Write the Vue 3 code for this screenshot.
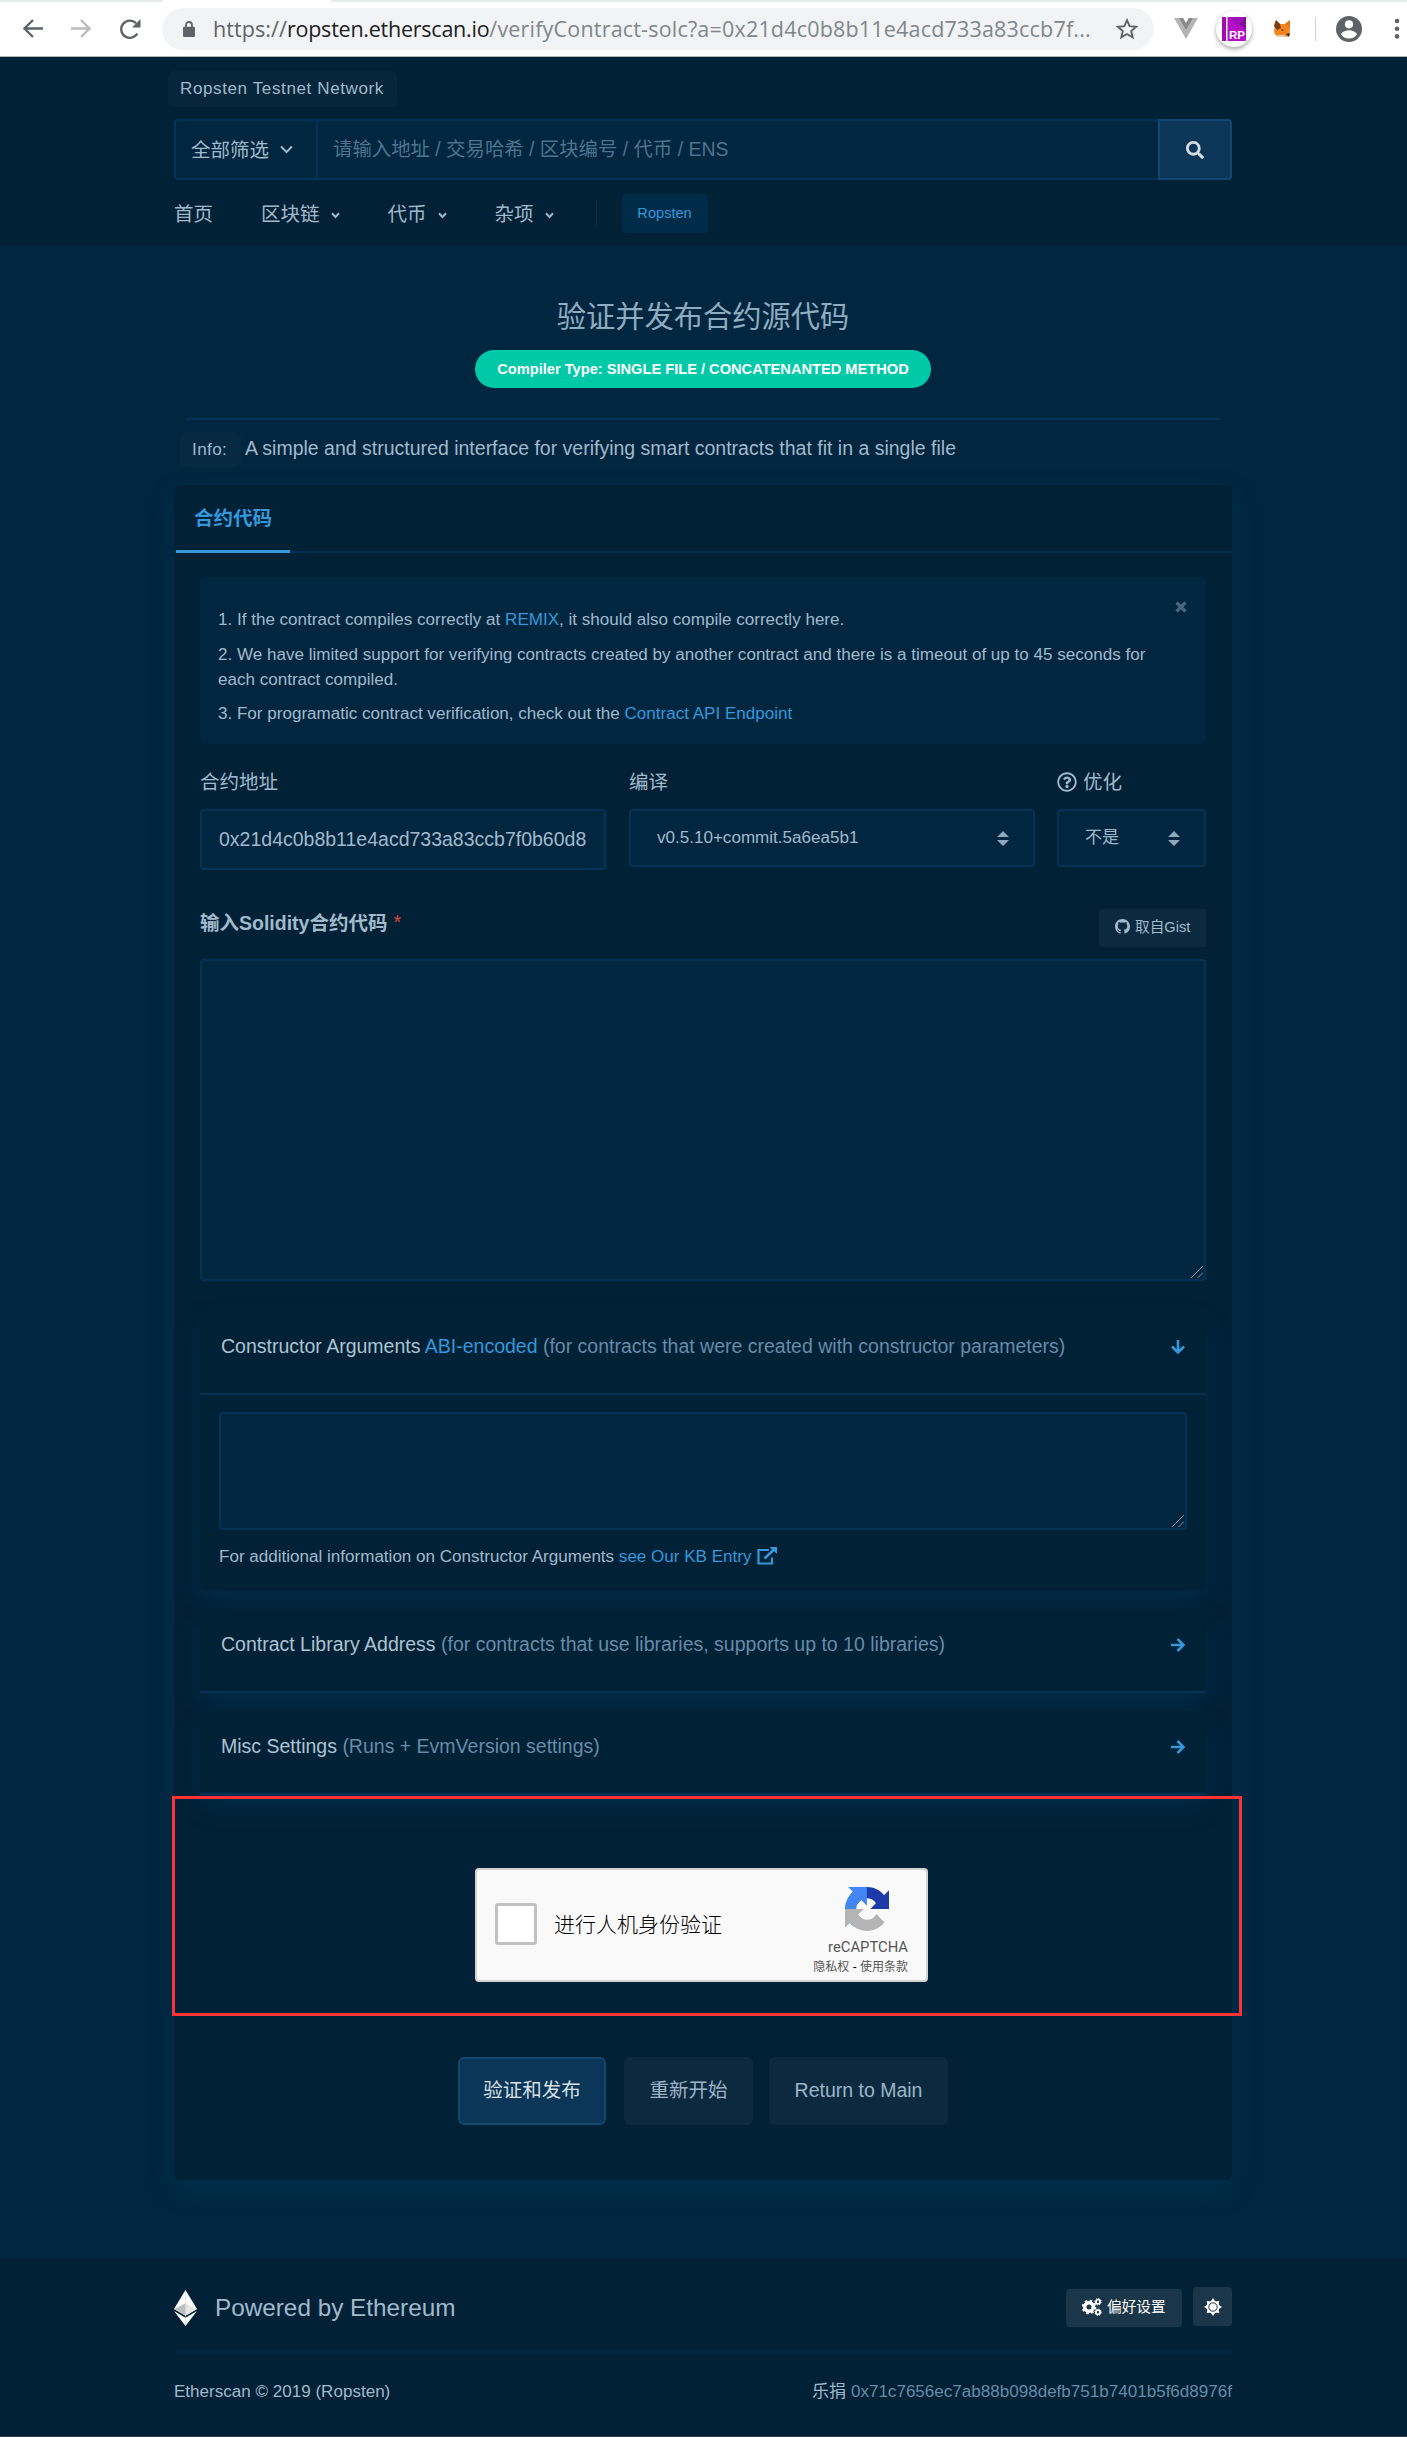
<script setup>
const nav = ['区块链', '代币', '杂项']
const gearTeeth = [0, 45, 90, 135, 180, 225, 270, 315]
</script>

<template>
  <div class="page">
    <div class="chrome">
      <div class="strip"><span class="strip-tab"></span></div>
      <svg class="c-back" viewBox="0 0 20 19"><path d="M20 9.5H2M10 1L1.5 9.500l8.500 8.500" /></svg>
      <svg class="c-fwd" viewBox="0 0 20 19"><path d="M0 9.500h18M10 1l8.500 8.500L10 18" /></svg>
      <svg class="c-reload" viewBox="0 0 22 20"><path d="M18.300 14.500A8.600 8.600 0 1 1 17 4.200" fill="none" stroke="#5f6368" stroke-width="2.400" /><path d="M21.500 0v8.500H13z" fill="#5f6368" /></svg>
      <div class="pill">
        <svg class="c-lock" viewBox="0 0 12 16"><path d="M3 7V4a3 3 0 0 1 6 0v3" fill="none" stroke="#5f6368" stroke-width="1.800" /><rect y="5.800" width="12" height="10.200" rx="1.300" fill="#5f6368" /></svg>
        <div class="url"><span class="u1">https://</span><span class="u2">ropsten.etherscan.io</span><span class="u3">/verifyContract-solc?a=0x21d4c0b8b11e4acd733a83ccb7f...</span></div>
        <svg class="c-star" viewBox="0 0 22 21"><path d="M11 2.200l2.600 6 6.500.600-4.900 4.300 1.500 6.300-5.700-3.400-5.700 3.400 1.500-6.300-4.900-4.300 6.500-.600z" /></svg>
      </div>
      <svg class="c-vue" viewBox="0 0 24 21"><path d="M0 0h4.800L12 12.500 19.200 0H24L12 21z" fill="#b4b4b4" /><path d="M4.800 0h4.400L12 4.900 14.800 0h4.400L12 12.500z" fill="#8a8a8a" /></svg>
      <div class="c-rp">
        <svg viewBox="0 0 24 24"><rect width="24" height="24" rx="1" fill="#b510c8" /><path d="M9 0h15v13z" fill="#7f0f9c" /><path d="M9 0l6 9 9-9z" fill="#9c12b4" /><rect width="4" height="24" fill="#a30cae" /><rect x="4" width="1.500" height="24" fill="#fff" /><text x="7" y="21.500" font-size="11.500">RP</text></svg>
      </div>
      <svg class="c-fox" viewBox="0 0 18 18"><path d="M2 1l5 3h5l5-4v9l-1 7-3 1-3-1H3L1 12z" fill="#f6851b" /><path d="M3 0l4 4 1 4-4 2-3-4z" fill="#763d16" /><path d="M12 4l5-4v7z" fill="#e2761b" /><path d="M3 15h8l3 2H4z" fill="#e8cdb5" /><path d="M8 9l3 1-2 1zM13 14l4-1-1 4z" fill="#3b2a20" /></svg>
      <span class="c-sep"></span>
      <svg class="c-user" viewBox="0 0 26 26"><circle cx="13" cy="13" r="13" fill="#5f6368" /><circle cx="13" cy="8.300" r="4.100" fill="#fff" /><path d="M4.800 18.200c1.500-2.700 5.200-4 8.200-4s6.700 1.300 8.200 4A9.800 9.800 0 0 1 13 22.400a9.800 9.800 0 0 1-8.200-4.200z" fill="#fff" /></svg>
      <svg class="c-dots" viewBox="0 0 6 22"><circle cx="3" cy="3" r="2.300" /><circle cx="3" cy="10.700" r="2.300" /><circle cx="3" cy="18.400" r="2.300" /></svg>
    </div>

    <header class="header">
      <div class="wrap">
        <span class="net">Ropsten Testnet Network</span>
        <div class="search">
          <div class="filter"><span>全部筛选</span><svg viewBox="0 0 12 8"><path d="M1 1.200l5 5.200 5-5.200" /></svg></div>
          <div class="query">请输入地址 / 交易哈希 / 区块编号 / 代币 / ENS</div>
          <div class="go"><svg viewBox="0 0 512 512"><path d="M505 442.700L405.300 343c-4.500-4.500-10.600-7-17-7H372c27.600-35.300 44-79.700 44-128C416 93.100 322.900 0 208 0S0 93.100 0 208s93.100 208 208 208c48.300 0 92.700-16.400 128-44v16.300c0 6.400 2.500 12.500 7 17l99.700 99.700c9.400 9.400 24.600 9.400 33.900 0l28.300-28.300c9.400-9.400 9.400-24.600.100-34zM208 336c-70.700 0-128-57.200-128-128 0-70.700 57.200-128 128-128 70.700 0 128 57.200 128 128 0 70.700-57.200 128-128 128z" /></svg></div>
        </div>
        <nav class="nav">
          <span class="home">首页</span>
          <span v-for="n in nav" :key="n" class="item">{{ n }}<svg viewBox="0 0 9 7"><path d="M1 1.300l3.500 3.700L8 1.300" /></svg></span>
          <span class="bar"></span>
          <span class="tag">Ropsten</span>
        </nav>
      </div>
    </header>

    <main class="wrap">
      <h1>验证并发布合约源代码</h1>
      <div class="center"><span class="compiler">Compiler Type: SINGLE FILE / CONCATENANTED METHOD</span></div>
      <div class="rule"></div>
      <div class="info"><span class="info-tag">Info:</span><span class="info-text">A simple and structured interface for verifying smart contracts that fit in a single file</span></div>

      <section class="card">
        <div class="tabs"><span class="tab">合约代码</span></div>
        <div class="body">
          <div class="alert">
            <p>1. If the contract compiles correctly at <a>REMIX</a>, it should also compile correctly here.</p>
            <p>2. We have limited support for verifying contracts created by another contract and there is a timeout of up to 45 seconds for<br>each contract compiled.</p>
            <p>3. For programatic contract verification, check out the <a>Contract API Endpoint</a></p>
            <svg class="close" viewBox="0 0 12 12"><path d="M1.500 1.500l9 9M10.500 1.500l-9 9" /></svg>
          </div>

          <div class="fields">
            <div class="f1"><label>合约地址</label><div class="input">0x21d4c0b8b11e4acd733a83ccb7f0b60d8</div></div>
            <div class="f2"><label>编译</label><div class="select"><span>v0.5.10+commit.5a6ea5b1</span><svg viewBox="0 0 12 15"><path d="M0 6l6-6 6 6zM0 9l6 6 6-6z" /></svg></div></div>
            <div class="f3"><label><svg class="help" viewBox="0 0 512 512"><path d="M256 8C119.043 8 8 119.083 8 256c0 136.997 111.043 248 248 248s248-111.003 248-248C504 119.083 392.957 8 256 8zm0 448c-110.532 0-200-89.431-200-200 0-110.495 89.472-200 200-200 110.491 0 200 89.471 200 200 0 110.530-89.431 200-200 200zm107.244-255.200c0 67.052-72.421 68.084-72.421 92.863V300c0 6.627-5.373 12-12 12h-45.647c-6.627 0-12-5.373-12-12v-8.659c0-35.745 27.100-50.034 47.579-61.516 17.561-9.845 28.324-16.541 28.324-29.579 0-17.246-21.999-28.693-39.784-28.693-23.189 0-33.894 10.977-48.942 29.969-4.057 5.120-11.460 6.071-16.666 2.124l-27.824-21.098c-5.107-3.872-6.251-11.066-2.644-16.363C184.846 131.491 214.940 112 261.794 112c49.071 0 101.450 38.304 101.450 88.800zM298 368c0 23.159-18.841 42-42 42s-42-18.841-42-42 18.841-42 42-42 42 18.841 42 42z" /></svg>优化</label><div class="select"><span>不是</span><svg viewBox="0 0 12 15"><path d="M0 6l6-6 6 6zM0 9l6 6 6-6z" /></svg></div></div>
          </div>

          <div class="code-head">
            <div class="code-title">输入Solidity合约代码<sup>*</sup></div>
            <span class="gist"><svg viewBox="0 0 16 16"><path d="M8 0C3.580 0 0 3.580 0 8c0 3.540 2.290 6.530 5.470 7.590.400.070.550-.170.550-.380 0-.190-.010-.820-.010-1.490-2.010.370-2.530-.490-2.690-.940-.090-.230-.480-.940-.820-1.130-.280-.150-.680-.520-.010-.530.630-.010 1.080.580 1.230.820.720 1.210 1.870.870 2.330.660.070-.520.280-.870.510-1.070-1.780-.200-3.640-.890-3.640-3.950 0-.870.310-1.590.820-2.150-.080-.200-.360-1.020.080-2.120 0 0 .670-.210 2.200.820.640-.180 1.320-.270 2-.270.680 0 1.360.090 2 .270 1.530-1.040 2.200-.820 2.200-.820.440 1.100.160 1.920.080 2.120.510.560.820 1.270.820 2.150 0 3.070-1.870 3.750-3.650 3.950.290.250.540.730.540 1.480 0 1.070-.010 1.930-.010 2.200 0 .210.150.460.550.380A8.013 8.013 0 0 0 16 8c0-4.420-3.580-8-8-8z" /></svg>取自Gist</span>
          </div>
          <div class="area big"><svg viewBox="0 0 12 12"><path d="M0 12L12 0M6.500 12L12 6.500" /></svg></div>

          <div class="panel first">
            <div class="panel-head"><div>Constructor Arguments <a>ABI-encoded</a> <i>(for contracts that were created with constructor parameters)</i></div><svg class="arr" viewBox="0 0 14 14"><path d="M7 0v12M1 6.500l6 6 6-6" /></svg></div>
            <div class="panel-body">
              <div class="area small"><svg viewBox="0 0 12 12"><path d="M0 12L12 0M6.500 12L12 6.500" /></svg></div>
              <div class="kb">For additional information on Constructor Arguments <a>see Our KB Entry</a><svg viewBox="0 0 20 18"><path d="M12 3H1.500v13.500H15V10.500" fill="none" stroke="#3498db" stroke-width="2.200" /><path d="M7.500 11.500L17 2.500" stroke="#3498db" stroke-width="2.600" /><path d="M12.500 0H20v7z" fill="#3498db" /></svg></div>
            </div>
          </div>
          <div class="panel"><div class="panel-head"><div>Contract Library Address <i>(for contracts that use libraries, supports up to 10 libraries)</i></div><svg class="arr" viewBox="0 0 14 14"><path d="M0 7h12M6.500 1l6 6-6 6" /></svg></div></div>
          <div class="panel"><div class="panel-head"><div>Misc Settings <i>(Runs + EvmVersion settings)</i></div><svg class="arr" viewBox="0 0 14 14"><path d="M0 7h12M6.500 1l6 6-6 6" /></svg></div></div>

          <div class="captcha">
            <span class="box"></span>
            <span class="robot">进行人机身份验证</span>
            <div class="brand">
              <svg viewBox="0 0 64 64"><path d="M64 31.955l-.033-1.370V4.687l-7.160 7.160C50.948 4.674 42.033.093 32.050.093c-10.400 0-19.622 4.960-25.458 12.640l11.736 11.860a15.550 15.550 0 0 1 4.754-5.334c2.050-1.600 4.952-2.906 8.968-2.906.485 0 .860.057 1.135.163 4.976.393 9.288 3.140 11.828 7.124l-8.307 8.307L64 31.953" fill="#1c3aa9" /><path d="M31.862.094l-1.370.033H4.594l7.160 7.160C4.580 13.147 0 22.060 0 32.046c0 10.400 4.960 19.622 12.640 25.458L24.500 45.768a15.550 15.550 0 0 1-5.334-4.754c-1.600-2.050-2.906-4.952-2.906-8.968 0-.485.057-.860.163-1.135.393-4.976 3.140-9.288 7.124-11.828l8.307 8.307L31.860.095" fill="#4285f4" /><path d="M.001 32.045l.033 1.370v25.898l7.160-7.160c5.860 7.173 14.774 11.754 24.760 11.754 10.400 0 19.622-4.960 25.458-12.640l-11.736-11.860a15.550 15.550 0 0 1-4.754 5.334c-2.050 1.600-4.952 2.906-8.968 2.906-.485 0-.860-.057-1.135-.163-4.976-.393-9.288-3.140-11.828-7.124l8.307-8.307c-10.522.040-22.400.066-27.295-.005" fill="#b4b4b4" /></svg>
              <span class="b1">reCAPTCHA</span>
              <span class="b2">隐私权 <b>-</b> 使用条款</span>
            </div>
          </div>

          <div class="actions"><span class="btn primary">验证和发布</span><span class="btn b-reset">重新开始</span><span class="btn b-main">Return to Main</span></div>
        </div>
        <div class="highlight"></div>
      </section>
    </main>

    <footer class="footer">
      <div class="wrap">
        <div class="f-top">
          <svg class="eth" viewBox="0 0 23 36"><path d="M11.500 0L23 19l-11.500 6.700L0 19z" fill="#fff" /><path d="M11.500 13.500L0 19l11.500 6.700z" fill="#bdbdbd" /><path d="M11.500 13.500L23 19l-11.500 6.700z" fill="#e6e6e6" /><path d="M0 21l11.500 6.800L23 21 11.500 36z" fill="#fff" /><path d="M11.500 0v36" stroke="#c9c9c9" stroke-width=".500" /></svg>
          <span class="powered">Powered by Ethereum</span>
          <span class="pref"><svg viewBox="0 0 20 18"><g fill="none" stroke="#fff"><circle cx="7" cy="9" r="4.300" stroke-width="3.600" /><circle cx="7" cy="9" r="6.400" stroke-width="1.800" stroke-dasharray="2.510 2.510" /><circle cx="16" cy="3.800" r="2.100" stroke-width="1.800" /><circle cx="16" cy="3.800" r="3.200" stroke-width="1" stroke-dasharray="1.250 1.250" /><circle cx="16" cy="14.200" r="2.100" stroke-width="1.800" /><circle cx="16" cy="14.200" r="3.200" stroke-width="1" stroke-dasharray="1.250 1.250" /></g></svg>偏好设置</span>
          <span class="theme"><svg viewBox="-9 -9 18 18"><path v-for="a in gearTeeth" :key="a" d="M-2.600 -5L0 -9l2.600 4z" :transform="`rotate(${a})`" /><circle r="6.300" /><circle r="4.200" fill="none" stroke="#1b3649" stroke-width="1" /></svg></span>
        </div>
        <div class="f-bottom"><span>Etherscan © 2019 (Ropsten)</span><span>乐捐 <i>0x71c7656ec7ab88b098defb751b7401b5f6d8976f</i></span></div>
      </div>
    </footer>
  </div>
</template>

<style>
body { background: #01263f; }
</style>

<style scoped>
* { box-sizing: border-box; }
.page { width: 1407px; height: 2437px; overflow: hidden; background: #01263f; color: #a2b9cc; font: 19.5px/24px "Liberation Sans", "Noto Sans CJK SC", sans-serif; display: flex; flex-direction: column; white-space: nowrap; }
svg { display: block; flex: none; }
a { color: #3498db; }
i { font-style: normal; color: #668ca8; }
.wrap { width: 1058px; margin-left: 174px; }

.chrome { position: relative; height: 57px; flex: none; background: #fff; border-bottom: 1px solid #b4b7ba; display: flex; align-items: center; padding-top: 1px; }
.strip { position: absolute; left: 0; top: 0; width: 100%; height: 2px; background: #e7eaed; }
.strip-tab { display: block; width: 168px; height: 2px; margin-left: 163px; background: #fff; }
.c-back, .c-fwd { width: 20px; height: 19px; fill: none; stroke: #5f6368; stroke-width: 2.3; margin-left: 23px; }
.c-fwd { stroke: #babcbe; margin-left: 28px; }
.c-reload { width: 22px; height: 20px; margin-left: 28px; }
.pill { width: 992px; height: 42px; border-radius: 21px; background: #f1f3f4; margin-left: 21px; display: flex; align-items: center; padding-left: 21px; }
.c-lock { width: 12px; height: 16px; }
.url { margin-left: 18px; width: 903px; font-family: "Open Sans", sans-serif; font-size: 21.5px; color: #80868b; }
.u1 { color: #5f6368; letter-spacing: .08px; }
.u2 { color: #202124; letter-spacing: -.24px; }
.u3 { letter-spacing: .19px; }
.c-star { width: 22px; height: 21px; fill: none; stroke: #5f6368; stroke-width: 1.9; }
.c-vue { width: 24px; height: 21px; margin-left: 20px; }
.c-rp { width: 36px; height: 36px; border-radius: 50%; background: #fff; box-shadow: 0 2px 4px rgba(0,0,0,.35); margin-left: 18px; display: flex; align-items: center; justify-content: center; }
.c-rp svg { width: 24px; height: 24px; }
.c-rp text { fill: #fff; font-family: "Liberation Sans", sans-serif; font-weight: 700; }
.c-fox { width: 18px; height: 18px; margin-left: 21px; }
.c-sep { width: 1px; height: 24px; background: #cfd1d4; margin-left: 24px; }
.c-user { width: 26px; height: 26px; margin-left: 20px; }
.c-dots { width: 6px; height: 22px; margin-left: 32px; fill: #5f6368; }

.header { height: 189px; flex: none; padding-top: 14px; background: #012136; }
.net { display: block; width: 229px; height: 36px; line-height: 36px; margin-left: -6px; border-radius: 6px; background: #06263b; font-size: 17.06px; letter-spacing: .6px; padding-left: 12px; }
.search { display: flex; height: 61px; margin-top: 12px; }
.filter { width: 144px; border: 2px solid #013457; border-radius: 4px 0 0 4px; background: #01263f; display: flex; align-items: center; padding-left: 15px; }
.filter svg { width: 13px; height: 9px; margin-left: 11px; fill: none; stroke: #a2b9cc; stroke-width: 1.9; }
.query { flex: 1; border: 2px solid #013457; border-width: 2px 0; background: #01263f; line-height: 57px; padding-left: 15px; color: #4e748f; font-size: 19.4px; }
.go { width: 74px; border: 2px solid #12486f; border-radius: 0 4px 4px 0; background: #0b3657; display: flex; align-items: center; justify-content: center; }
.go svg { width: 18px; height: 18px; fill: #d5dce2; }
.nav { display: flex; align-items: center; height: 39px; margin-top: 14px; }
.home { width: 87px; }
.item { display: flex; align-items: center; margin-right: 48px; }
.item svg { width: 9px; height: 7px; margin: 4px 0 0 11px; fill: none; stroke: #a2b9cc; stroke-width: 2; }
.bar { width: 1px; height: 30px; background: #01304f; margin-left: -6px; }
.tag { margin-left: 25px; width: 86px; height: 39px; line-height: 38px; text-align: center; border-radius: 4px; background: #012c49; color: #3498db; font-size: 14.6px; }

h1 { margin: 56px 0 0; height: 30px; line-height: 30px; font-size: 29.25px; font-weight: 400; text-align: center; color: #8fabc0; }
.center { display: flex; justify-content: center; margin-top: 18px; }
.compiler { width: 456px; height: 38px; line-height: 38px; text-align: center; border-radius: 19px; background: #00c9a7; color: #fff; font-size: 14.63px; font-weight: 700; }
.rule { height: 2px; margin: 30px 12px 0 12px; background: #013457; }
.info { display: flex; align-items: center; height: 35px; margin: 12px 0 0 6px; }
.info-tag { width: 61px; height: 35px; line-height: 36px; padding-left: 12px; margin-right: 4px; border-radius: 6px; background: #062a42; font-size: 17.06px; letter-spacing: .4px; }
.info-text { padding-bottom: 3px; }

.card { position: relative; height: 1695px; margin-top: 18px; border-radius: 6px; background: #012136; box-shadow: 0 10px 26px rgba(4,76,124,.25); }
.tabs { height: 68px; border-bottom: 2px solid #012f50; }
.tab { display: block; width: 114px; height: 68px; margin-left: 2px; padding-left: 18px; line-height: 66px; border-bottom: 3px solid #3498db; color: #3498db; font-weight: 700; }
.body { padding: 24px 26px 0; }
.alert { position: relative; height: 167px; border-radius: 6px; background: #01263f; padding: 30px 18px 0; font-size: 17.06px; line-height: 25px; }
.alert p { margin: 0 0 10px; }
.alert p + p { margin-bottom: 9px; }
.close { position: absolute; right: 19px; top: 24px; width: 12px; height: 12px; stroke: #45657d; stroke-width: 3.4; }
.fields { display: flex; justify-content: space-between; margin-top: 26px; height: 100px; }
.f1, .f2 { width: 406px; }
.f1 { margin-right: 23px; }
.f2 { margin-right: 22px; }
.f3 { width: 149px; }
label { display: flex; align-items: center; height: 24px; margin-bottom: 15px; }
.help { width: 20px; height: 20px; margin-right: 6px; fill: #a2b9cc; }
.input { height: 61px; border: 2px solid #013457; border-radius: 4px; background: #01263f; line-height: 57px; padding-left: 17px; }
.select { height: 58px; border: 2px solid #013457; border-radius: 4px; background: #01263f; display: flex; align-items: center; justify-content: space-between; padding: 0 24px 0 26px; font-size: 17.06px; }
.select svg { width: 12px; height: 15px; fill: #8fa8bc; }
.code-head { display: flex; justify-content: space-between; height: 38px; margin-top: 39px; }
.code-title { font-weight: 700; line-height: 28px; }
sup { font-weight: 400; font-size: 19.5px; color: #de4437; margin-left: 6px; line-height: 0; vertical-align: 1px; }
.gist { width: 107px; height: 38px; border-radius: 4px; background: #0c2a3f; display: flex; align-items: center; padding: 0 0 3px 16px; font-size: 14.63px; }
.gist svg { width: 15px; height: 15px; margin-right: 5px; fill: #a2b9cc; }
.area { position: relative; border: 2px solid #013457; border-radius: 4px; background: #01263f; }
.area svg { position: absolute; right: 1px; bottom: 1px; width: 12px; height: 12px; stroke: #93a1ac; stroke-width: .9; }
.big { height: 322px; margin-top: 12px; }
.panel { border-radius: 6px; background: #012136; box-shadow: 0 12px 26px rgba(4,76,124,.24); margin-top: 18px; position: relative; }
.panel.first { margin-top: 30px; height: 280px; }
.panel-head { display: flex; justify-content: space-between; height: 84px; border-bottom: 2px solid #013457; padding: 23px 21px 0; color: #aec2d2; }
.arr { width: 14px; height: 14px; margin-top: 6px; fill: none; stroke: #3498db; stroke-width: 2.6; }
.panel-body { padding: 17px 19px 0; }
.small { height: 118px; }
.kb { display: flex; align-items: center; margin-top: 15px; font-size: 17.06px; white-space: pre; }
.kb svg { width: 20px; height: 18px; margin: -2px 0 0 5px; }
.captcha { position: relative; width: 453px; height: 114px; margin: 73px 0 0 275px; background: #f9f9f9; border: 2px solid #d3d3d3; border-radius: 4px; display: flex; align-items: center; padding-left: 18px; color: #000; }
.box { width: 42px; height: 42px; border: 3px solid #c1c1c1; border-radius: 3px; background: #fff; margin-top: -2px; }
.robot { margin-left: 17px; width: 261px; font-size: 21px; font-weight: 300; }
.brand { align-self: flex-start; width: 93px; display: flex; flex-direction: column; align-items: flex-end; color: #555; padding-top: 17px; }
.brand svg { width: 44px; height: 44px; margin-right: 19px; }
.b1 { font: 14.8px/18px Roboto, sans-serif; margin-top: 7px; }
.b2 { font-size: 12px; line-height: 16px; margin-top: 3px; }
.b2 b { font-weight: 400; color: #000; }
.actions { display: flex; margin: 75px 0 0 258px; }
.btn { height: 68px; line-height: 66px; border-radius: 6px; background: #0c2a3f; text-align: center; color: #9db4c7; }
.primary { width: 148px; border: 2px solid #12486f; background: #0b3657; line-height: 62px; color: #d9e0e6; }
.b-reset { width: 129px; margin-left: 18px; }
.b-main { width: 179px; margin-left: 16px; }
.highlight { position: absolute; left: -2px; top: 1311px; width: 1070px; height: 220px; border: 3px solid #ff3333; }

.footer { margin-top: 78px; height: 179px; flex: none; background: #012136; border-bottom: 1px solid #3a3f43; }
.f-top { display: flex; align-items: center; height: 95px; padding: 4px 0 0; border-bottom: 2px solid #01263f; }
.eth { width: 23px; height: 36px; margin-top: 2px; }
.powered { margin-left: 18px; font-size: 24.3px; flex: 1; line-height: 30px; margin-top: 3px; }
.pref { width: 116px; height: 38px; border-radius: 4px; background: #1b3649; color: #fff; display: flex; align-items: center; padding: 0 0 2px 16px; font-size: 14.63px; margin-top: 2px; }
.pref svg { width: 20px; height: 18px; margin-right: 5px; }
.theme { width: 39px; height: 39px; margin-left: 11px; border-radius: 4px; background: #1b3649; display: flex; align-items: center; justify-content: center; }
.theme svg { width: 18px; height: 18px; fill: #fff; }
.f-bottom { display: flex; justify-content: space-between; padding-top: 27px; font-size: 17.06px; }
</style>
